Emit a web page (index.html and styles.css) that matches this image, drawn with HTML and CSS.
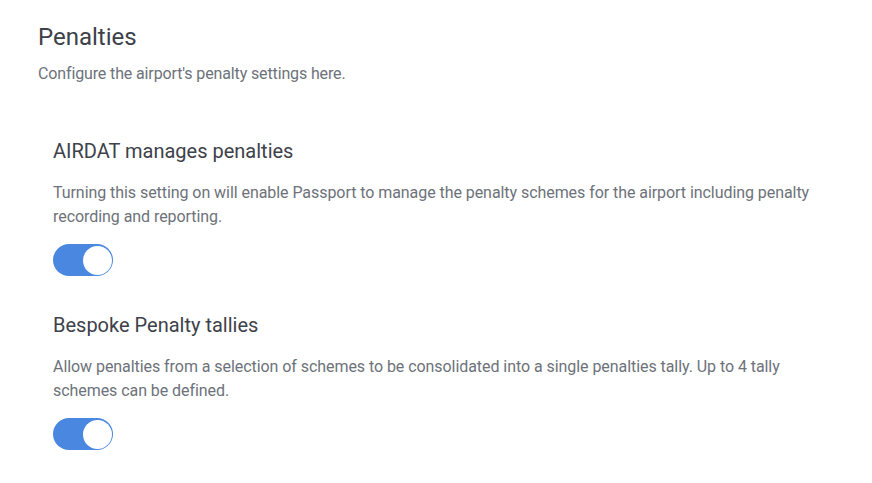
FILE: index.html
```html
<!DOCTYPE html>
<html lang="en">
<head>
<meta charset="utf-8">
<title>Penalties</title>
<link rel="stylesheet" href="styles.css">
</head>
<body>
<main class="page">
  <h1 class="page-title">Penalties</h1>
  <p class="page-sub">Configure the airport's penalty settings here.</p>

  <section class="setting">
    <h2 class="setting-title">AIRDAT manages penalties</h2>
    <p class="setting-desc">Turning this setting on will enable Passport to manage the penalty schemes for the airport including penalty recording and reporting.</p>
    <label class="toggle">
      <input type="checkbox" checked>
      <span class="track"><span class="knob"></span></span>
    </label>
  </section>

  <section class="setting">
    <h2 class="setting-title">Bespoke Penalty tallies</h2>
    <p class="setting-desc">Allow penalties from a selection of schemes to be consolidated into a single penalties tally. Up to 4 tally schemes can be defined.</p>
    <label class="toggle">
      <input type="checkbox" checked>
      <span class="track"><span class="knob"></span></span>
    </label>
  </section>
</main>
</body>
</html>
```

FILE: styles.css
```css
* { box-sizing: border-box; }
html, body { margin: 0; background: #ffffff; }
body {
  font-family: Roboto, "Noto Sans", "Liberation Sans", sans-serif;
  color: #3f434a;
}
.page {
  padding: 21px 38px 20px 38px;
}
.page-title {
  margin: 0;
  font-size: 24px;
  line-height: 32px;
  font-weight: 400;
  color: #3d4149;
}
.page-sub {
  margin: 11px 0 0 0;
  font-size: 16px;
  line-height: 20px;
  letter-spacing: -0.13px;
  color: #6d727a;
}
.setting {
  padding-left: 15px;
  margin-top: 53px;
}
.setting + .setting { margin-top: 35px; }
.setting-title {
  margin: 0;
  font-size: 20px;
  line-height: 28px;
  font-weight: 400;
  color: #3d4149;
}
.setting-desc {
  margin: 16px 0 0 0;
  font-size: 16px;
  line-height: 24px;
  letter-spacing: -0.06px;
  color: #6d727a;
}
.toggle {
  display: block;
  width: 60px;
  height: 32px;
  margin-top: 15px;
  position: relative;
}
.toggle input {
  position: absolute;
  opacity: 0;
  width: 0;
  height: 0;
  margin: 0;
}
.track {
  display: flex;
  justify-content: flex-end;
  align-items: center;
  width: 60px;
  height: 32px;
  border-radius: 16px;
  background: #4a87e0;
  padding: 1.5px;
}
.knob {
  display: block;
  width: 29px;
  height: 29px;
  border-radius: 50%;
  background: #ffffff;
}
```
